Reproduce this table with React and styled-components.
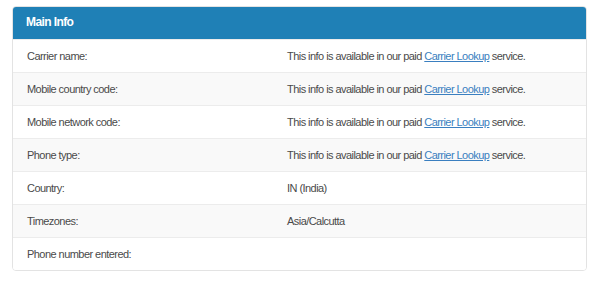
import React from "react";
import styled, { createGlobalStyle } from "styled-components";

const rows = [
  { label: "Carrier name:", paid: true },
  { label: "Mobile country code:", paid: true },
  { label: "Mobile network code:", paid: true },
  { label: "Phone type:", paid: true },
  { label: "Country:", value: "IN (India)" },
  { label: "Timezones:", value: "Asia/Calcutta" },
  { label: "Phone number entered:", value: "" },
];

export default function App() {
  return (
    <>
      <Global />
      <Page>
        <Panel>
          <Heading>Main Info</Heading>
          {rows.map((r, i) => (
            <Row key={r.label} $striped={i % 2 === 1}>
              <Label>{r.label}</Label>
              <Value>
                {r.paid ? (
                  <>
                    This info is available in our paid <Link href="#">Carrier Lookup</Link> service.
                  </>
                ) : (
                  r.value
                )}
              </Value>
            </Row>
          ))}
        </Panel>
      </Page>
    </>
  );
}

const Global = createGlobalStyle`
  body {
    margin: 0;
    background: #fff;
    font-family: "Liberation Sans", Arial, sans-serif;
  }
`;

const Page = styled.div`
  padding: 6px 13px 0 12px;
`;

const Panel = styled.div`
  width: 575px;
  border: 1px solid #e3e3e3;
  border-radius: 4px;
  overflow: hidden;
  box-sizing: border-box;
`;

const Heading = styled.div`
  height: 33px;
  box-sizing: border-box;
  background: #1f80b6;
  color: #fff;
  font-weight: 700;
  font-size: 12px;
  letter-spacing: -0.6px;
  line-height: 33px;
  padding-left: 14px;
  margin: -1px -1px 0;
`;

const Row = styled.div`
  display: grid;
  grid-template-columns: 259px 1fr;
  height: 33px;
  box-sizing: border-box;
  align-items: center;
  background: ${({ $striped }) => ($striped ? "#f9f9f9" : "#fff")};
  border-top: 1px solid #ececec;
  &:first-of-type {
    border-top: 0;
  }
  font-size: 11px;
  letter-spacing: -0.55px;
  color: #4a4a4a;
`;

const Label = styled.div`
  padding-left: 14px;
`;

const Value = styled.div`
  padding-left: 15px;
`;

const Link = styled.a`
  color: #3a7fc0;
  text-decoration: underline;
`;
